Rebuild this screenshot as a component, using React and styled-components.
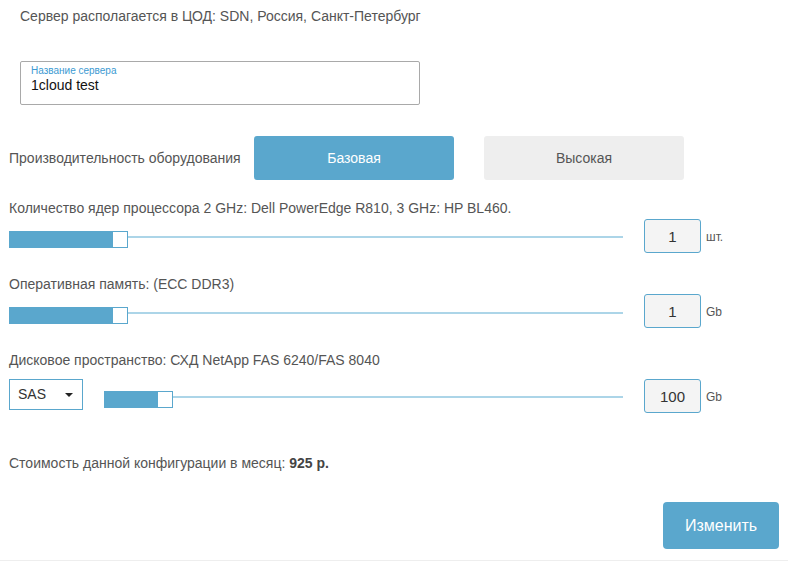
import React from 'react'
import styled, { createGlobalStyle } from 'styled-components'

const GlobalStyle = createGlobalStyle`
    html, body{
        margin: 0;
        padding: 0;
        background: #fff;
    }
    body{
        font-family: "Liberation Sans", Arial, sans-serif;
        color: #555;
    }
`

const blue = '#5aa7cd'

const StyledPage = styled.main`
    width: 788px;
    box-sizing: border-box;
    padding: 0 9px 11px;
    border-bottom: 1px solid #eeeeee;
    font-size: 14px;
    line-height: 15px;
`

const LocationNote = styled.p`
    margin: 0;
    padding: 9px 11px 0;
`

const NameField = styled.div`
    margin: 37px 0 0 11px;
    width: 400px;
    height: 44px;
    box-sizing: border-box;
    border: 1px solid #a9a9a9;
    border-radius: 2px;
    padding: 3px 10px 0;
    label{
        display: block;
        font-size: 10px;
        line-height: 12px;
        color: #3c9ad2;
    }
    .value{
        font-size: 14px;
        line-height: 17px;
        color: #111;
    }
`

const PerfRow = styled.div`
    display: flex;
    align-items: center;
    margin-top: 31px;
    height: 44px;
    .caption{
        flex: 0 0 245px;
    }
    .options{
        display: flex;
        gap: 30px;
    }
`

const ModeButton = styled.button`
    width: 200px;
    height: 44px;
    border: none;
    border-radius: 3px;
    font-family: inherit;
    font-size: 14px;
    background: ${p => p.$active ? blue : '#eeeeee'};
    color: ${p => p.$active ? '#fff' : '#555'};
`

const ParamLabel = styled.div`
    margin-top: ${p => p.$gap}px;
`

const SliderRow = styled.div`
    display: flex;
    align-items: flex-start;
    margin-top: ${p => p.$gap}px;
`

const Slider = styled.div`
    flex: 1;
    display: flex;
    margin-top: ${p => p.$offset}px;
    height: 17px;
    .fill{
        height: 17px;
        background: ${blue};
    }
    .thumb{
        width: 16px;
        height: 17px;
        box-sizing: border-box;
        background: #fff;
        border: 1px solid ${blue};
    }
    .track{
        flex: 1;
        height: 2px;
        margin-top: 5px;
        background: #acd5e8;
    }
`

const ValueBox = styled.div`
    flex: 0 0 57px;
    height: 34px;
    margin-left: 21px;
    box-sizing: border-box;
    border: 1px solid ${blue};
    border-radius: 3px;
    background: #f4f4f4;
    display: flex;
    align-items: center;
    justify-content: center;
    font-size: 15px;
    color: #333;
`

const Unit = styled.span`
    flex: 0 0 73px;
    margin-left: 5px;
    align-self: center;
    padding-top: 2px;
    font-size: 12px;
`

const DiskSelect = styled.div`
    flex: 0 0 74px;
    height: 31px;
    margin-right: 21px;
    box-sizing: border-box;
    border: 1px solid ${blue};
    display: flex;
    align-items: center;
    justify-content: space-between;
    padding: 0 9px 0 8px;
    font-size: 14px;
    color: #333;
    .arrow{
        width: 0;
        height: 0;
        border-left: 4px solid transparent;
        border-right: 4px solid transparent;
        border-top: 4px solid #222;
    }
`

const Cost = styled.p`
    margin: 43px 0 0;
    b{
        color: #444;
    }
`

const Footer = styled.div`
    display: flex;
    justify-content: flex-end;
    margin-top: 31px;
`

const SubmitButton = styled.button`
    width: 116px;
    height: 47px;
    border: none;
    border-radius: 4px;
    background: ${blue};
    color: #fff;
    font-family: inherit;
    font-size: 16px;
`

function Range({ fill, offset }) {
    return (
        <Slider $offset={offset}>
            <div className="fill" style={{ width: fill }}></div>
            <div className="thumb"></div>
            <div className="track"></div>
        </Slider>
    )
}

export default function App() {
    return (
        <>
            <GlobalStyle />
            <StyledPage>
                <LocationNote>Сервер располагается в ЦОД: SDN, Россия, Санкт-Петербург</LocationNote>
                <NameField>
                    <label>Название сервера</label>
                    <div className="value">1cloud test</div>
                </NameField>
                <PerfRow>
                    <span className="caption">Производительность оборудования</span>
                    <div className="options">
                        <ModeButton $active>Базовая</ModeButton>
                        <ModeButton>Высокая</ModeButton>
                    </div>
                </PerfRow>

                <ParamLabel $gap={21}>Количество ядер процессора 2 GHz: Dell PowerEdge R810, 3 GHz: HP BL460.</ParamLabel>
                <SliderRow $gap={3}>
                    <Range fill={103} offset={12} />
                    <ValueBox>1</ValueBox>
                    <Unit>шт.</Unit>
                </SliderRow>

                <ParamLabel $gap={24}>Оперативная память: (ECC DDR3)</ParamLabel>
                <SliderRow $gap={2}>
                    <Range fill={103} offset={13} />
                    <ValueBox>1</ValueBox>
                    <Unit>Gb</Unit>
                </SliderRow>

                <ParamLabel $gap={25}>Дисковое пространство: СХД NetApp FAS 6240/FAS 8040</ParamLabel>
                <SliderRow $gap={11}>
                    <DiskSelect>
                        <span>SAS</span>
                        <span className="arrow"></span>
                    </DiskSelect>
                    <Range fill={53} offset={12} />
                    <ValueBox>100</ValueBox>
                    <Unit>Gb</Unit>
                </SliderRow>

                <Cost>Стоимость данной конфигурации в месяц: <b>925 р.</b></Cost>
                <Footer>
                    <SubmitButton>Изменить</SubmitButton>
                </Footer>
            </StyledPage>
        </>
    )
}
